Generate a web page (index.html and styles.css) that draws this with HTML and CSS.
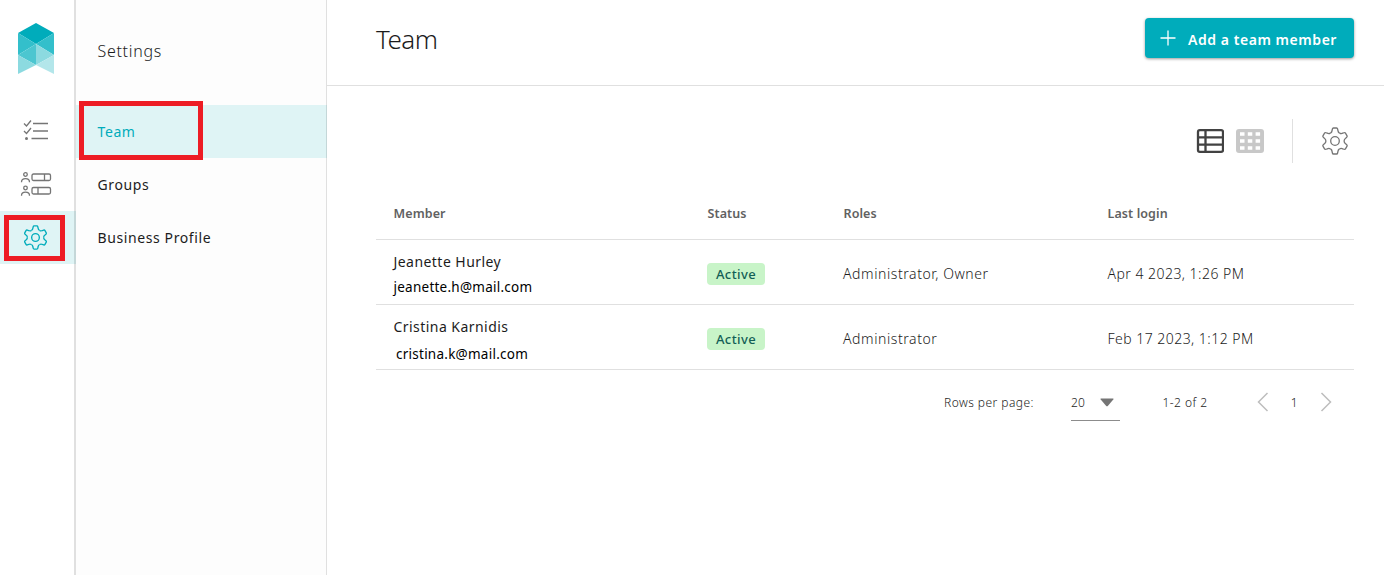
FILE: index.html
```html
<!DOCTYPE html>
<html lang="en">
<head>
<meta charset="UTF-8">
<meta name="viewport" content="width=device-width, initial-scale=1.0">
<title>Team</title>
<link rel="stylesheet" href="styles.css">
</head>
<body>
    <svg class="defs" width="0" height="0">
        <symbol id="gear" viewBox="-14 -14 28 28">
            <path id="tooth" d="M-4.55-7.88Q-3-8.8-2.9-10.6L-2.6-12Q-2.4-13-1.6-13H1.6Q2.4-13 2.6-12L2.9-10.6Q3-8.8 4.55-7.88"/>
            <use href="#tooth" transform="rotate(60)"/>
            <use href="#tooth" transform="rotate(120)"/>
            <use href="#tooth" transform="rotate(180)"/>
            <use href="#tooth" transform="rotate(240)"/>
            <use href="#tooth" transform="rotate(300)"/>
            <circle r="4.3"/>
        </symbol>
    </svg>
    <div class="app">
        <nav class="rail">
            <svg class="logo" width="38" height="52" viewBox="0 0 38 52">
                <path fill="#00acbb" d="M19 0L37 10L19 21L1 10z"/>
                <path fill="#33bfcb" d="M1 10L19 21L1 32z"/>
                <path fill="#33bfcb" d="M37 10V32L19 21z"/>
                <path fill="#4cc6d0" d="M19 21V42L1 32z"/>
                <path fill="#8cdae0" d="M19 21L37 32L19 42z"/>
                <path fill="#8cdae0" d="M1 32L19 42L1 51z"/>
                <path fill="#b3e6ea" d="M37 32V51L19 42z"/>
            </svg>
            <a class="rail-item">
                <svg class="icon-tasks" width="30" height="24" viewBox="0 0 30 24">
                    <path d="M2 5.500L4.500 8L9 2.500M2 13L4.500 15.500L9 10M11 5.500H26M11 13H26M9.500 20.500H26"/>
                    <circle class="solid" cx="4.500" cy="20.500" r="1.500"/>
                </svg>
            </a>
            <a class="rail-item">
                <svg class="icon-teams" width="32" height="27" viewBox="0 0 32 27">
                    <circle cx="5.500" cy="4.500" r="1.800"/>
                    <path d="M1.500 12.200Q1.500 8.700 5.500 8.700T9.500 12.200"/>
                    <rect x="12" y="4" width="18.500" height="6.500" rx="1.500"/>
                    <path d="M24.500 4V10.500"/>
                    <circle cx="5.500" cy="18" r="1.800"/>
                    <path d="M1.500 25.700Q1.500 22.200 5.500 22.200T9.500 25.700"/>
                    <rect x="12" y="17.500" width="18.500" height="6.500" rx="1.500"/>
                    <path d="M18 17.500V24"/>
                </svg>
            </a>
            <a class="rail-item active">
                <svg width="25" height="25"><use href="#gear"/></svg>
            </a>
            <div class="highlight highlight-gear"></div>
        </nav>
        <aside class="sidebar">
            <div class="sidebar-title">Settings</div>
            <a class="menu-item active">Team</a>
            <a class="menu-item">Groups</a>
            <a class="menu-item">Business Profile</a>
            <div class="highlight highlight-team"></div>
        </aside>
        <main class="main">
            <header class="header">
                <h1>Team</h1>
                <button class="add-button">
                    <svg width="16" height="16" viewBox="0 0 16 16"><path d="M8 .5V15.500M.5 8H15.500"/></svg>
                    <span>Add a team member</span>
                </button>
            </header>
            <div class="toolbar">
                <svg class="view-list" width="28" height="24" viewBox="0 0 28 24">
                    <rect x="2" y="1.200" width="25" height="21.600" rx="1.800"/>
                    <path d="M2 8.300H27M2 15.700H27M9.500 1V23"/>
                </svg>
                <svg class="view-grid" width="28" height="24" viewBox="0 0 28 24">
                    <rect width="28" height="24" rx="3"/>
                    <path d="M4 5H8.500M11.800 5H16.300M19.600 5H24.100M4 12H8.500M11.800 12H16.300M19.600 12H24.100M4 19H8.500M11.800 19H16.300M19.600 19H24.100"/>
                </svg>
                <span class="divider"></span>
                <svg class="table-gear" width="28" height="28"><use href="#gear"/></svg>
            </div>
            <table class="team-table">
                <thead>
                    <tr>
                        <th class="col-member">Member</th>
                        <th class="col-status">Status</th>
                        <th class="col-roles">Roles</th>
                        <th>Last login</th>
                    </tr>
                </thead>
                <tbody>
                    <tr>
                        <td class="member"><div class="name">Jeanette Hurley</div><div class="email">jeanette.h@mail.com</div></td>
                        <td><span class="badge">Active</span></td>
                        <td>Administrator, Owner</td>
                        <td class="login">Apr 4 2023, 1:26 PM</td>
                    </tr>
                    <tr>
                        <td class="member"><div class="name">Cristina Karnidis</div><div class="email email-second">cristina.k@mail.com</div></td>
                        <td><span class="badge">Active</span></td>
                        <td>Administrator</td>
                        <td class="login">Feb 17 2023, 1:12 PM</td>
                    </tr>
                </tbody>
            </table>
            <div class="pagination">
                <span class="rows-label">Rows per page:</span>
                <span class="rows-select">20
                    <svg width="14" height="9" viewBox="0 0 14 9"><path d="M1 .5H13Q14 .5 13.300 1.500L8 7.800Q7 8.800 6 7.800L.7 1.500Q0 .5 1 .5z"/></svg>
                </span>
                <span class="range">1-2 of 2</span>
                <svg class="arrow" width="12" height="20" viewBox="0 0 12 20"><path d="M10.500 1L1.500 10L10.500 19"/></svg>
                <span class="page">1</span>
                <svg class="arrow" width="12" height="20" viewBox="0 0 12 20"><path d="M1.500 1L10.500 10L1.500 19"/></svg>
            </div>
        </main>
    </div>
</body>
</html>
```
FILE: styles.css
```css
* {
    box-sizing: border-box;
}
body {
    margin: 0;
    background-color: #fff;
    color: #1c1c1c;
    font-family: "Noto Sans", "Open Sans", sans-serif;
    font-size: 14px;
    overflow: hidden;
}
svg {
    display: block;
    flex: none;
    fill: none;
}
.defs {
    position: absolute;
}
.app {
    display: flex;
    height: 575px;
}

/* icon rail */
.rail {
    position: relative;
    width: 76px;
    border-right: 2px solid #e0e0e0;
    flex: none;
}
.logo {
    margin: 23px 0 30px 17px;
}
.rail-item {
    display: flex;
    align-items: center;
    justify-content: center;
    height: 53px;
    padding-right: 3px;
    stroke: #757575;
    stroke-width: 1.3;
}
.rail-item .solid {
    fill: #757575;
    stroke: none;
}
.icon-tasks {
    margin: 0 0 3px 3px;
}
.icon-teams {
    margin: 0 0 3px 1px;
}
.rail-item.active {
    background-color: #dff4f5;
    stroke: #00acbb;
    stroke-width: 1.5;
    margin-right: -2px;
    border-right: 2px solid #c4d7d8;
}
.highlight {
    position: absolute;
    border: 5px solid #ed1c24;
}
.highlight-gear {
    left: 4px;
    top: 215px;
    width: 61px;
    height: 46px;
}
.highlight-team {
    left: 3px;
    top: 101px;
    width: 124px;
    height: 59px;
}

/* settings menu */
.sidebar {
    position: relative;
    width: 251px;
    flex: none;
    background-color: #fdfdfd;
    border-right: 1px solid #e0e0e0;
}
.sidebar-title {
    height: 105px;
    padding: 39px 0 0 21.5px;
    font-size: 16px;
    font-weight: 350;
    line-height: 24px;
    letter-spacing: 0.7px;
}
.menu-item {
    display: flex;
    align-items: center;
    height: 53px;
    padding-left: 21.5px;
    font-weight: 450;
    letter-spacing: 0.6px;
}
.menu-item.active {
    color: #00acbb;
    background-color: #dff4f5;
    margin-right: -1px;
    border-right: 1px solid #c4d7d8;
}

/* content */
.main {
    flex: 1;
}
.header {
    display: flex;
    justify-content: space-between;
    align-items: flex-start;
    height: 86px;
    padding: 18px 30px 0 49px;
    border-bottom: 1px solid #e0e0e0;
}
h1 {
    margin: 3px 0 0;
    font-size: 26px;
    font-weight: 350;
    line-height: 36px;
    letter-spacing: -0.5px;
}
.add-button {
    display: flex;
    align-items: center;
    width: 209px;
    height: 40px;
    padding: 2px 0 0 15px;
    border: none;
    border-radius: 4px;
    background-color: #00acbb;
    color: #fff;
    font-family: inherit;
    font-size: 14px;
    font-weight: 600;
    letter-spacing: 0.55px;
    white-space: nowrap;
    box-shadow: 0 1px 3px rgba(0, 0, 0, 0.4);
}
.add-button svg {
    margin: -3px 12px 0 0;
    stroke: #fff;
    stroke-width: 1.3;
}
.toolbar {
    display: flex;
    align-items: center;
    justify-content: flex-end;
    height: 44px;
    margin-top: 33px;
    padding-right: 35px;
}
.view-list {
    stroke: #424242;
    stroke-width: 2.3;
    margin-right: 12px;
}
.view-grid rect {
    fill: #c8c8c8;
}
.view-grid path {
    stroke: #fff;
    stroke-width: 3.5;
}
.divider {
    width: 1px;
    height: 44px;
    margin: 0 28px;
    background-color: #e0e0e0;
}
.table-gear {
    stroke: #757575;
    stroke-width: 1.3;
}
.team-table {
    width: 978px;
    margin: 24px 0 0 49px;
    table-layout: fixed;
    border-collapse: separate;
    border-spacing: 0;
}
th, td {
    padding: 0 0 0 17px;
    border-bottom: 1px solid #e0e0e0;
    text-align: left;
    white-space: nowrap;
}
th {
    height: 53px;
    padding-left: 17.5px;
    color: #616161;
    font-size: 12.5px;
    font-weight: 650;
    letter-spacing: 0.1px;
}
.col-member {
    width: 314px;
}
.col-status {
    width: 136px;
}
.col-roles {
    width: 264px;
}
td {
    height: 65px;
    padding-top: 3px;
    font-weight: 350;
    letter-spacing: 0.58px;
}
.login {
    padding-left: 17.5px;
    letter-spacing: 0.47px;
}
td.member {
    vertical-align: top;
    padding-top: 11px;
    padding-left: 17.5px;
}
.name {
    font-weight: 400;
    line-height: 22px;
    letter-spacing: 0.45px;
}
.email {
    margin-top: 4px;
    color: #000;
    font-size: 13.5px;
    font-weight: 400;
    line-height: 20px;
    letter-spacing: 0.25px;
}
.email-second {
    margin: 6px 0 -2px 2.5px;
}
.badge {
    display: inline-block;
    width: 58px;
    height: 22px;
    border-radius: 4px;
    background-color: #c8f4c8;
    color: #135f56;
    font-size: 13px;
    font-weight: 500;
    line-height: 22px;
    letter-spacing: 0.4px;
    text-align: center;
}
.pagination {
    display: flex;
    align-items: center;
    height: 36px;
    margin-top: 15px;
    padding-left: 617px;
    padding-bottom: 2px;
    font-size: 12px;
    font-weight: 350;
    letter-spacing: 0.45px;
}
.rows-label {
    width: 127px;
}
.rows-select {
    display: flex;
    align-items: center;
    gap: 15px;
    width: 49px;
    height: 36px;
    margin-bottom: -2px;
    border-bottom: 1px solid #8c8c8c;
    letter-spacing: 0.25px;
}
.rows-select svg {
    fill: #757575;
}
.range {
    width: 94.5px;
    margin-left: 42.5px;
}
.arrow {
    stroke: #bdbdbd;
    stroke-width: 1.5;
}
.page {
    width: 51px;
    text-align: center;
}
```
